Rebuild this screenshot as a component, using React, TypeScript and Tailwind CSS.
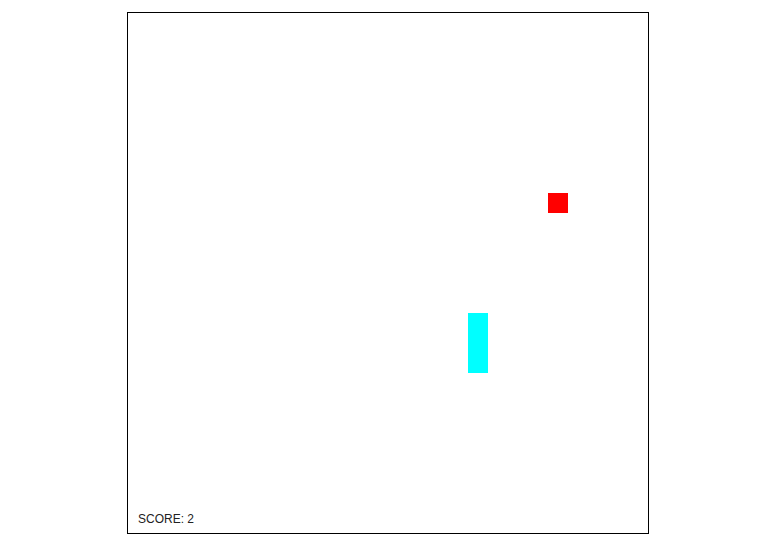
const CELL = 20

const snake = [
  { x: 17, y: 15 },
  { x: 17, y: 16 },
  { x: 17, y: 17 },
]
const food = { x: 21, y: 9 }

export default function App() {
  return (
    <div className="w-[764px] h-[548px] bg-white pt-[12px] pl-[127px] font-['Liberation_Sans',Arial,sans-serif]">
      <div className="relative w-[522px] h-[522px] border border-black bg-white">
        {snake.map((s, i) => (
          <div
            key={i}
            className="absolute w-[20px] h-[20px] bg-[#00ffff]"
            style={{ left: s.x * CELL, top: s.y * CELL }}
          />
        ))}
        <div
          className="absolute w-[20px] h-[20px] bg-[#ff0000]"
          style={{ left: food.x * CELL, top: food.y * CELL }}
        />
        <div className="absolute left-[10px] bottom-[8px] text-[12px] leading-none text-[#222]">SCORE: 2</div>
      </div>
    </div>
  )
}
